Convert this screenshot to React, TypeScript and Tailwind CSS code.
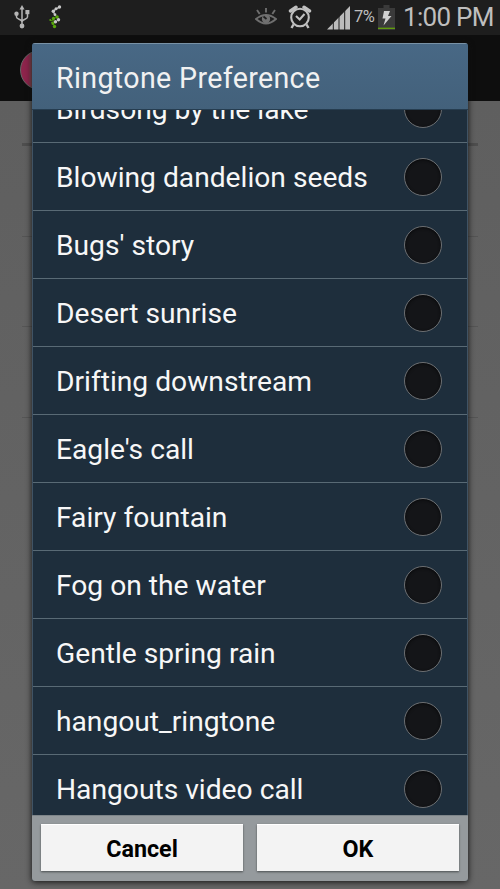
import { clsx } from 'clsx';

const ringtones = [
  'Birdsong by the lake',
  'Blowing dandelion seeds',
  "Bugs' story",
  'Desert sunrise',
  'Drifting downstream',
  "Eagle's call",
  'Fairy fountain',
  'Fog on the water',
  'Gentle spring rain',
  'hangout_ringtone',
  'Hangouts video call',
];

function UsbIcon() {
  return (
    <svg width="16" height="24" viewBox="0 0 16 24" fill="none" stroke="#b5b5b5" strokeWidth="1.5">
      <path d="M8 3v17M2.5 9v3c0 2.500 5.500 2 5.500 5M13.500 8v4c0 2.500-5.500 2-5.500 5" />
      <path d="M8 0l2.500 4.500h-5z" fill="#b5b5b5" stroke="none" />
      <circle cx="2.500" cy="8.700" r="2.200" fill="#b5b5b5" stroke="none" />
      <path d="M11.400 5h4v4.200h-4z" fill="#b5b5b5" stroke="none" />
      <circle cx="8" cy="21" r="2.400" fill="#b5b5b5" stroke="none" />
    </svg>
  );
}

function MoleculeIcon() {
  return (
    <svg width="14" height="24" viewBox="0 0 14 24">
      <path d="M10.500 2L6 4.500 4.500 7l1.500 3" stroke="#aaa" strokeWidth="1.500" fill="none" />
      <path d="M1.500 15.500l3.500.5M2 17.500l3-.5" stroke="#4e8f0c" strokeWidth="1" fill="none" />
      <g fill="#58a70c">
        <circle cx="8" cy="12" r="1.800" />
        <circle cx="4.500" cy="13.500" r="1.700" />
        <circle cx="1.300" cy="15" r="1" />
        <circle cx="4" cy="18.500" r="1.500" />
        <circle cx="5.500" cy="21.500" r="1.700" />
      </g>
      <g fill="#c8c8c8">
        <circle cx="10.500" cy="2" r="1.700" />
        <circle cx="7" cy="3.700" r="1.500" />
        <circle cx="4.300" cy="6.200" r="1.700" />
        <circle cx="6" cy="9.700" r="1.400" />
        <circle cx="9.500" cy="14.700" r="1.700" />
        <circle cx="6.500" cy="16.700" r="1.700" />
      </g>
    </svg>
  );
}

function EyeIcon() {
  return (
    <svg width="22" height="18" viewBox="0 0 22 18" fill="none" stroke="#6e6e6e" strokeWidth="1.900">
      <path d="M1 11Q11 3 21 11Q11 20 1 11z" />
      <circle cx="11" cy="11" r="4.200" fill="#707070" stroke="none" />
      <path d="M11 0v4.500M2 2l2.700 4M20 2l-2.700 4" />
      <path d="M8.500 8.500l3 2.500" stroke="#1e1e1e" strokeWidth="1.700" />
    </svg>
  );
}

function AlarmIcon() {
  return (
    <svg width="24" height="24" viewBox="0 0 24 24" fill="none" stroke="#c0c0c0" strokeWidth="2.100">
      <circle cx="12" cy="12.500" r="8.800" />
      <path d="M8 11l3.700 3.500L16.500 9" />
      <path d="M5.500 19.500L3.500 23M18.500 19.500l2 3.500" strokeWidth="2.400" />
      <path d="M2.500 6L8 2.200M21.500 6L16 2.200" strokeWidth="3.400" strokeLinecap="round" />
    </svg>
  );
}

function SignalIcon() {
  return (
    <svg width="24" height="24" viewBox="0 0 24 24">
      <path d="M0 23.500L23 0v23.500z" fill="#bcbcbc" />
      <path d="M6.300 14v10M12 8v16M17.700 3v21" stroke="#1e1e1e" strokeWidth="1" />
    </svg>
  );
}

function BatteryIcon() {
  return (
    <svg width="17" height="25" viewBox="0 0 17 25">
      <path d="M5.500 0h6v3H17v22H0V3h5.500z" fill="#3a3a3a" />
      <path d="M0 23.300h17" stroke="#64a30c" strokeWidth="1.300" />
      <path d="M6 6h6l-2 5h3.500L5.500 20.500l2-7H4.500z" fill="#d0d0d0" />
    </svg>
  );
}

function StatusBar() {
  return (
    <div className="flex h-[35px] items-start bg-[#1e1e1e] text-[#bebebe]">
      <div className="ml-[14px] mt-[5px]">
        <UsbIcon />
      </div>
      <div className="ml-[19px] mt-[5px]">
        <MoleculeIcon />
      </div>
      <div className="ml-auto mt-[8px]">
        <EyeIcon />
      </div>
      <div className="ml-[11px] mt-[5px]">
        <AlarmIcon />
      </div>
      <div className="ml-[15px] mt-[6px]">
        <SignalIcon />
      </div>
      <span className="ml-[3px] mt-[8px] w-[24px] whitespace-nowrap text-[16.5px] leading-[18px] tracking-[-0.4px]">7%</span>
      <div className="mt-[5px]">
        <BatteryIcon />
      </div>
      <span className="ml-[8px] mt-[2px] w-[97px] whitespace-nowrap text-[26px] leading-[30px] tracking-[-0.7px]">1:00 PM</span>
    </div>
  );
}

function Backdrop() {
  return (
    <div className="flex h-full flex-col">
      <StatusBar />
      <div className="flex h-[66px] items-center bg-[#0e0e0e] pl-5">
        <div className="mt-1 size-10 rounded-full border border-[#666] bg-linear-to-r from-[#8d244b] from-20% to-[#796457] to-35%" />
      </div>
      <div className="flex flex-1 flex-col bg-linear-to-b from-[#5f5f5f] to-[#676767] px-[22px] pt-[42px]">
        <div className="h-[3px] bg-[#4e4e4e]" />
        <div className="mt-[90px] h-px bg-[#545454]" />
        <div className="mt-[89px] h-px bg-[#555]" />
        <div className="mt-[90px] h-px bg-[#555]" />
      </div>
    </div>
  );
}

function RingtoneRow({ name, first, last }: { name: string; first: boolean; last: boolean }) {
  return (
    <li
      className={clsx(
        'flex h-[68px] shrink-0 items-center justify-between pl-[23px] pr-[25px]',
        first && '-mt-[35px]',
        !last && 'border-b border-[#596a75]',
      )}
    >
      <span className="mt-[2px] whitespace-nowrap text-[28.2px] leading-[34px] text-[#f7f7f7]">{name}</span>
      <button
        type="button"
        role="radio"
        aria-checked={false}
        aria-label={name}
        className="size-[38px] rounded-full border-[1.500px] border-[#6c6f72] bg-[#141518] shadow-[inset_0_1px_3px_#08090b]"
      />
    </li>
  );
}

function DialogButton({ label }: { label: string }) {
  return (
    <button
      type="button"
      className="h-[47px] flex-1 border-t border-white bg-[#f3f3f3] pt-[2px] text-[23.3px] font-bold text-black shadow-[0_1px_2px_#4a4e50]"
    >
      {label}
    </button>
  );
}

export default function App() {
  return (
    <div className="relative h-[889px] w-[500px] overflow-hidden font-['Roboto',sans-serif]">
      <Backdrop />
      <div
        role="dialog"
        className="absolute left-8 top-[43px] flex h-[838px] w-[436px] flex-col overflow-hidden rounded-[3px] bg-[#1e2e3c] shadow-[0_1px_6px_#111]"
      >
        <div className="flex h-[66px] shrink-0 items-center border-t border-[#7992a6] bg-linear-to-b from-[#486885] to-[#43617b] pl-[24px] pt-[3px]">
          <h1 className="whitespace-nowrap text-[28.6px] leading-[34px] tracking-[0.35px] text-[#f1f1f1]">Ringtone Preference</h1>
        </div>
        <div className="h-px shrink-0 bg-[#263d50]" />
        <ul className="flex h-[705px] shrink-0 flex-col overflow-hidden border-x border-[#405364]">
          {ringtones.map((name, i) => (
            <RingtoneRow key={name} name={name} first={i === 0} last={i === ringtones.length - 1} />
          ))}
        </ul>
        <div className="flex h-[66px] shrink-0 gap-[14px] border-t border-[#7e8589] bg-[#959a9d] px-[9px] pt-[8px]">
          <DialogButton label="Cancel" />
          <DialogButton label="OK" />
        </div>
      </div>
    </div>
  );
}
